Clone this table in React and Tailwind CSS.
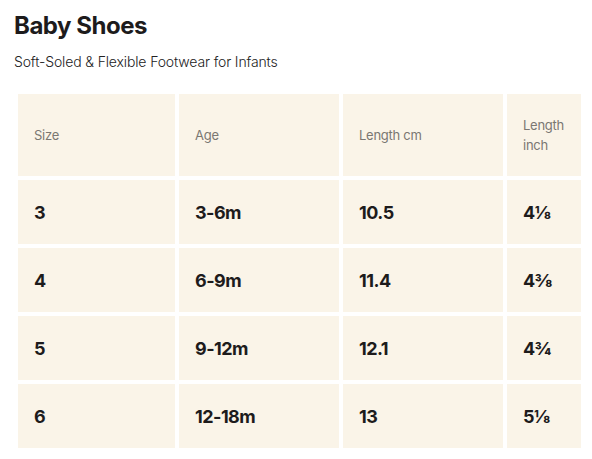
import React from 'react';

const rows = [
  ['3', '3-6m', '10.5', '4⅛'],
  ['4', '6-9m', '11.4', '4⅜'],
  ['5', '9-12m', '12.1', '4¾'],
  ['6', '12-18m', '13', '5⅛'],
];

const headers = ['Size', 'Age', 'Length cm', 'Length inch'];

const App = () => {
  return (
    <div className="min-h-screen bg-white pl-[14px] pr-[8px] pt-[10px] font-['Inter',sans-serif] text-[#1d1b1c]">
      {/* Title */}
      <h1 className="text-[24px] leading-[32px] font-bold tracking-[-0.02em]">Baby Shoes</h1>
      <p className="mt-[10px] text-[14px] leading-[20px] font-light text-[#222] tracking-[-0.01em]">
        Soft-Soled &amp; Flexible Footwear for Infants
      </p>

      {/* Size table */}
      <div className="mt-[18px] p-[4px] grid grid-cols-[157px_160px_160px_74px] gap-[4px]">
        {headers.map((h) => (
          <div
            key={h}
            className="h-[82px] bg-[#faf4e8] px-[16px] flex items-center text-[13px] leading-[20px] text-[#7a7772] tracking-[-0.02em]"
          >
            {h}
          </div>
        ))}
        {rows.map((r) =>
          r.map((c, i) => (
            <div
              key={r[0] + '-' + i}
              className="h-[64px] bg-[#faf4e8] px-[16px] flex items-center text-[18px] font-bold tracking-[-0.03em] text-[#1d1b1c]"
            >
              {c}
            </div>
          ))
        )}
      </div>
    </div>
  );
};

export default App;
